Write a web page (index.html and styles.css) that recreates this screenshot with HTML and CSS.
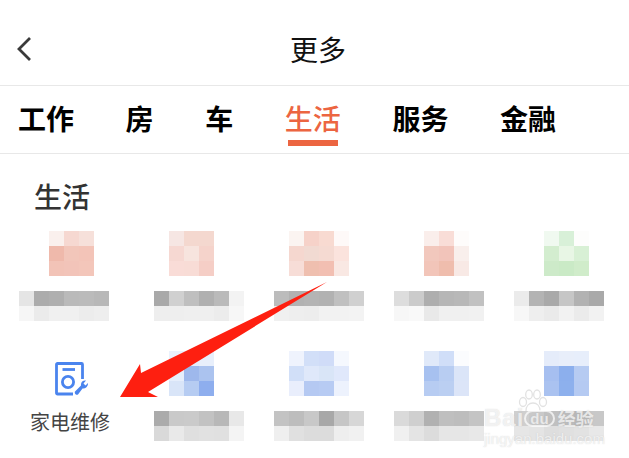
FILE: index.html
```html
<!DOCTYPE html>
<html lang="zh-CN">
<head>
  <meta charset="UTF-8" />
  <meta name="viewport" content="width=device-width, initial-scale=1.0"/>
  <title>更多</title>
  <link rel="stylesheet" href="styles.css">
</head>
<body>
  <header class="topbar">
    <svg class="back" width="16" height="26" viewBox="0 0 16 26">
      <path d="M14 2 3 13l11 11" fill="none" stroke="#3a3a3a" stroke-width="2.8"/>
    </svg>
    <h1>更多</h1>
  </header>

  <nav class="tabs">
    <a class="tab">工作</a>
    <a class="tab">房</a>
    <a class="tab">车</a>
    <a class="tab active">生活</a>
    <a class="tab">服务</a>
    <a class="tab">金融</a>
  </nav>

  <main class="section">
    <h2>生活</h2>
    <div id="tiles" class="tiles"></div>
  </main>

  <!-- annotation arrow drawn over the page -->
  <svg class="arrow" width="629" height="458" viewBox="0 0 629 458">
    <polygon points="120,397 140,364 141,373 327,282 148,392 158,397" fill="#fe1f10"/>
  </svg>

  <div class="watermark">
    <svg class="paw" width="30" height="22" viewBox="0 0 30 22">
      <g fill="#fff" fill-opacity="0.55" stroke="#e2e2e2" stroke-width="1.300">
        <ellipse cx="5" cy="13" rx="3.500" ry="4.500"/>
        <ellipse cx="11" cy="5.500" rx="3.300" ry="4.500"/>
        <ellipse cx="19" cy="5.500" rx="3.300" ry="4.500"/>
        <ellipse cx="25" cy="13" rx="3.500" ry="4.500"/>
        <path d="M8 22c0-5 3-8 7-8s7 3 7 8"/>
      </g>
    </svg>
    <div class="wm-brand"><span class="wm-bai">Bai</span><span class="wm-du">du</span><span class="wm-jy">经验</span></div>
    <div class="wm-url">jingyan.baidu.com</div>
  </div>

  <script>
    const g = v => '#' + v + v + v;
    const tiles = [
      { off: 45, cols: 3,
        icon: ['faf0ed','f6d8d1','f6e0da','efb9ab','f2c6ba','f3c4b8','f2c3b7','f2c4b9','f3c6ba'],
        text: ['e5','ac','af','ba','bb','b8','f6','eb','f0','f0','ec','ee'] },
      { off: 30, cols: 3,
        icon: ['f6e6e3','f4d8cf','f4d8cf','f6d8d2','f7e4de','f5d3cb','f9dcd7','f8dcd6','f5cec6'],
        text: ['a9','d0','bf','b0','ba','f3','ee','ee','ef','ef','ec','f7'] },
      { off: 30, cols: 4,
        icon: ['fbf4f1','f6d2c9','f8dad1','fef9f8','f5d7cf','f1dad2','f5dad2','fbe3dd','f7ddd7','efbfaf','f2bfb2','f9e8e3'],
        text: ['bc','b2','b4','b2','c0','d0','f0','ee','ed','f2','f2','f3'] },
      { off: 45, cols: 3,
        icon: ['faeeeb','f9ddd7','fefcfb','f2c8bd','f2c4ba','f9efec','f2c5b9','efbdad','f8e9e5'],
        text: ['dd','cb','ae','b6','b8','c1','f7','f9','e9','f0','f0','f1'] },
      { off: 45, cols: 3,
        icon: ['f0f9f0','d8f0d8','fdfdfc','d3edcf','e8f6e5','d8f0d5','cdeac9','caeac6','d0ecca'],
        text: ['eb','b3','a9','c6','b2','a9','f7','ee','ea','f2','eb','f2'] },
      { real: true },
      { off: 30, cols: 3,
        icon: ['eaf1fc','e6edfb','e8effb','e6eefb','9eb8ec','abc3ef','d9e5f8','b6ccf2','8eaeee'],
        text: ['ab','c9','ca','c2','b8','e8','d9','e9','df','e1','e0','f4'] },
      { off: 30, cols: 4,
        icon: ['eff3fd','d2dff8','d0dcf8','f5f8fe','d1dff8','dfe8fa','d9e5f7','e0e8fb','e9eefc','b5c9f2','b7cbf3','edf2fd'],
        text: ['c3','bd','c8','a8','c6','d7','ef','e0','dc','dc','ee','f1'] },
      { off: 45, cols: 3,
        icon: ['e0e9f9','d0def8','fbfcfe','a7c1f0','b8cdf2','dbe5f8','b7ccf2','bbcff2','dce5f8'],
        text: ['da','cf','b1','bf','bd','c4','f0','e4','dc','e6','e6','e8'] },
      { off: 45, cols: 3,
        icon: ['e5ecfa','e8eefa','e7eefb','a6bff0','8cafed','b6cbf2','aac2f0','8db0ed','b5caf2'],
        text: ['cf','c9','c0','bc','b8','c8','e6','e4','de','e0','e2','e8'] }
    ];

    const cell = color => `<i style="background:${color}"></i>`;

    document.getElementById('tiles').innerHTML = tiles.map(t => {
      if (t.real) {
        return `<div class="tile real">
          <svg class="repair" width="33" height="34" viewBox="0 0 33 34">
            <path d="M18 32H2.500a1 1 0 0 1-1-1V2.500a1 1 0 0 1 1-1H26.500a1 1 0 0 1 1 1V17" fill="none" stroke="#4a84ee" stroke-width="2.800"/>
            <path d="M7.500 7.500h12.500" stroke="#4a84ee" stroke-width="2.800"/>
            <circle cx="13" cy="20" r="5.600" fill="none" stroke="#4a84ee" stroke-width="2.800"/>
            <path d="M20 29.500 26 23.500C25.500 20 28 18 31 18.500L28.500 21.500 30.500 23.500 33 21C33.300 24.500 30.500 27 27.500 26.500L23 32.500C21.500 33.500 19 31.500 20 29.500Z" fill="#4a84ee"/>
          </svg>
          <span class="label">家电维修</span>
        </div>`;
      }
      return `<div class="tile">
        <div class="blur-icon" style="margin-left:${t.off - 15}px;grid-template-columns:repeat(${t.cols},15px)">${t.icon.map(v => cell('#' + v)).join('')}</div>
        <div class="blur-text">${t.text.map(v => cell(g(v))).join('')}</div>
      </div>`;
    }).join('');
  </script>
</body>
</html>
```

FILE: styles.css
```css
* { box-sizing: border-box; margin: 0; padding: 0; }
body { position: relative; width: 629px; height: 458px; overflow: hidden; background: #fff; color: #000; font-family: "Noto Sans CJK SC", "Noto Sans", sans-serif; }

.topbar { height: 86px; display: grid; grid-template-columns: 1fr auto 1fr; align-items: center; padding: 12px 9px 0 16px; border-bottom: 1px solid #e8e8e8; }
.topbar h1 { font-size: 28px; font-weight: 400; line-height: 30px; color: #111; }

.tabs { height: 68px; display: flex; gap: 51.6px; padding: 17px 0 0 18px; border-bottom: 1px solid #e8e8e8; }
.tab { display: flex; flex-direction: column; align-items: center; font-size: 28px; font-weight: 700; line-height: 30px; color: #000; }
.tab.active { color: #ec6541; font-weight: 500; }
.tab.active::after { content: ""; width: 50px; height: 6px; margin-top: 7px; background: #ec6541; }

.section { padding-top: 27px; }
.section h2 { font-size: 28px; font-weight: 500; line-height: 30px; color: #333; margin-left: 34px; }

.tiles { display: grid; grid-template-columns: 135px repeat(4, 120px); grid-auto-rows: 90px; row-gap: 30px; padding-left: 4px; margin-top: 20px; }
.tile { padding-left: 15px; }
.blur-icon { display: grid; grid-auto-rows: 15px; margin-bottom: 15px; }
.blur-text { display: grid; grid-template-columns: repeat(6, 15px); grid-auto-rows: 15px; }
.blur-icon i, .blur-text i { display: block; }

.tile.real { display: flex; flex-direction: column; align-items: flex-start; padding: 11px 0 0 26px; }
.repair { margin-left: 25px; }
.label { font-size: 20px; line-height: 26px; color: #444; margin-top: 13px; white-space: nowrap; }

.arrow { position: absolute; left: 0; top: 0; }

.watermark { position: absolute; left: 484px; top: 389px; width: 125px; color: rgba(255,255,255,0.7); text-shadow: 0 0 1px rgba(170,170,170,0.5); }
.paw { display: block; margin-left: 34px; }
.wm-brand { display: flex; align-items: center; height: 18px; margin-top: -2px; font-family: "Liberation Sans", sans-serif; font-size: 24px; font-weight: 700; line-height: 18px; white-space: nowrap; }
.wm-bai { letter-spacing: 1px; }
.wm-du { font-size: 15px; padding: 0 4px; margin: 0 3px 0 0; border: 2px solid rgba(255,255,255,0.7); border-radius: 9px; line-height: 13px; }
.wm-jy { font-family: "Noto Sans CJK SC", sans-serif; font-size: 18px; font-weight: 700; }
.wm-url { font-family: "Liberation Sans", sans-serif; font-size: 15px; line-height: 14px; margin-top: 5px; white-space: nowrap; }
```
